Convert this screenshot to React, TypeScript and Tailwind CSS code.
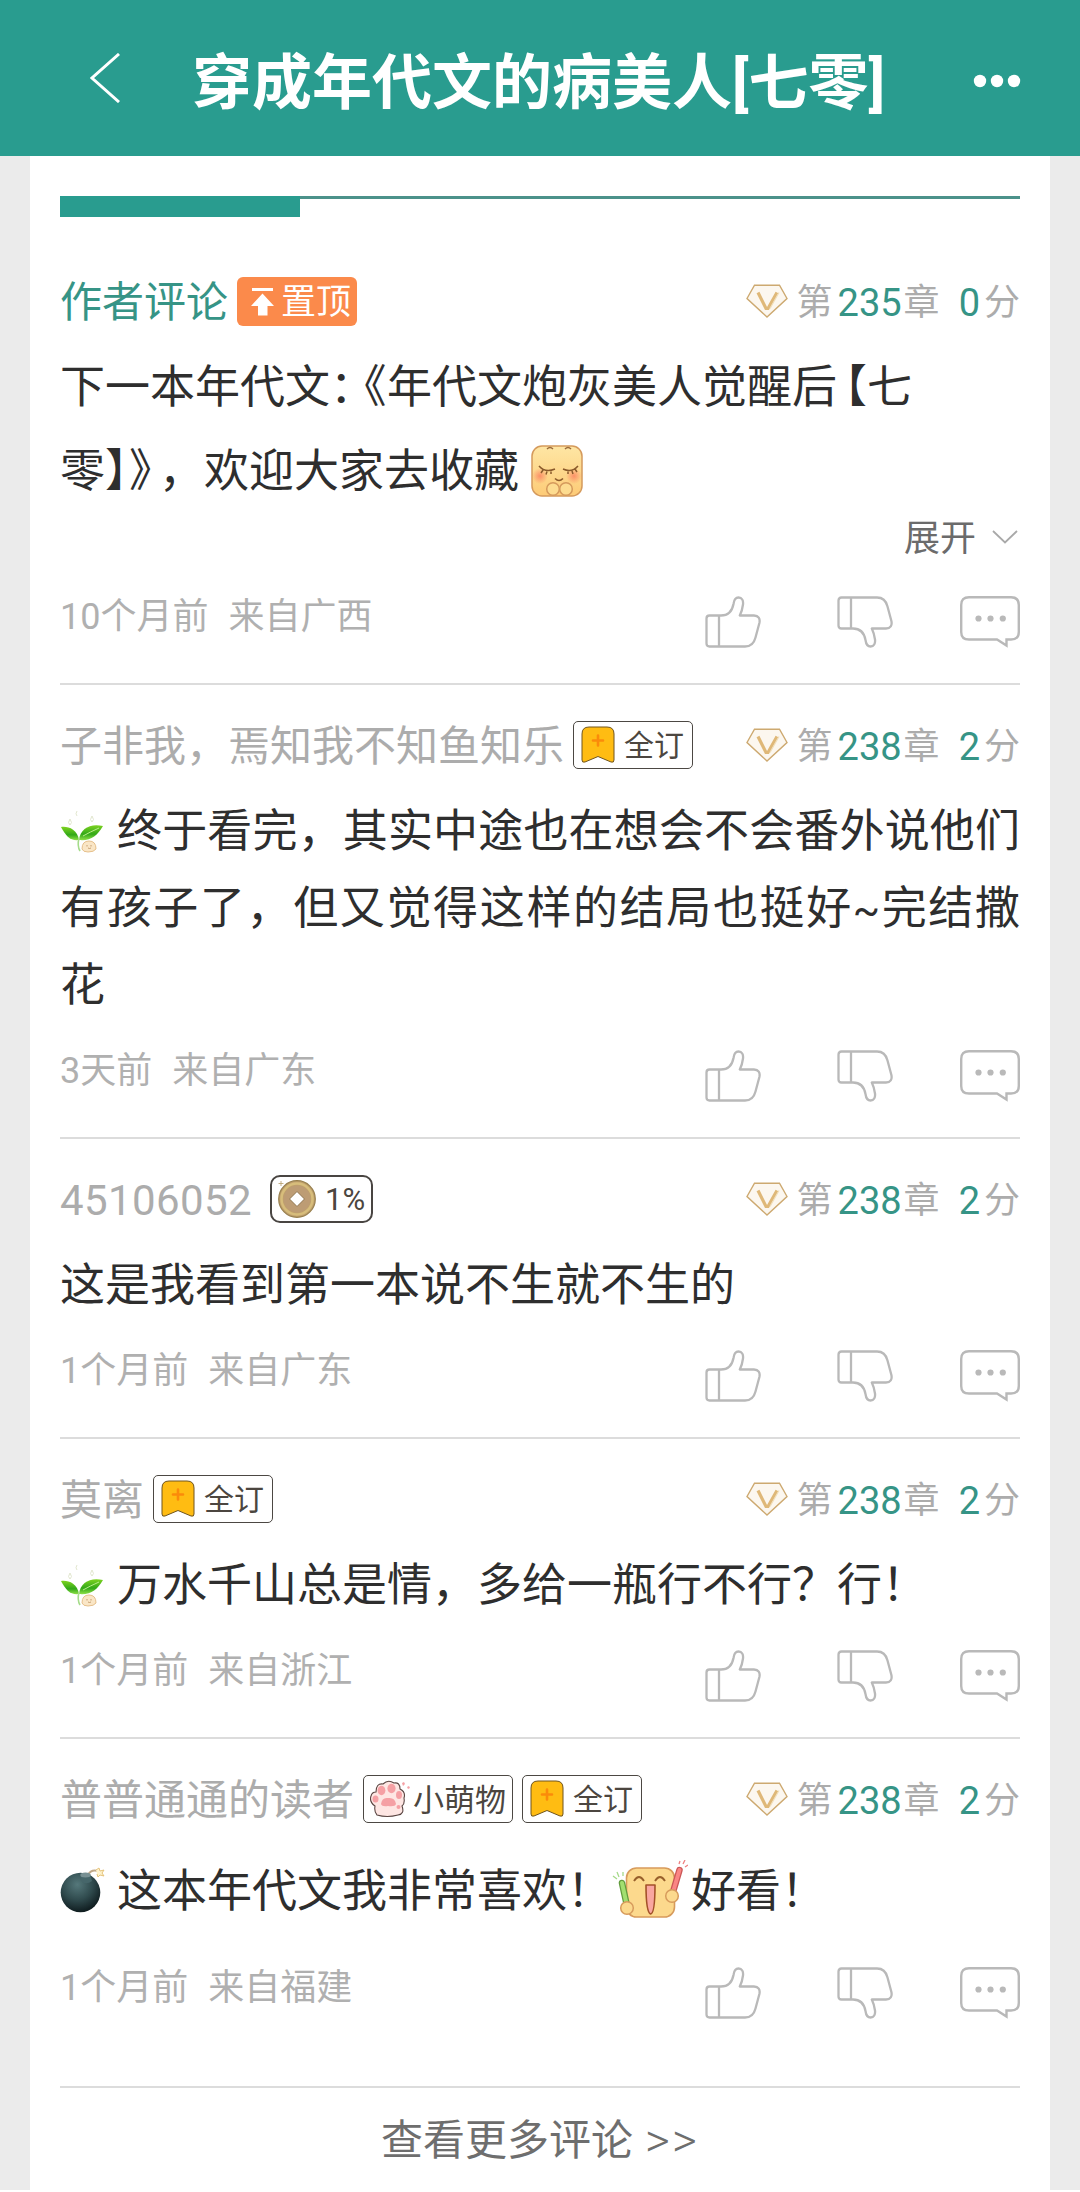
import type { ReactNode } from "react";

const LikeIcon = ({ flip = false }: { flip?: boolean }) => (
  <svg
    className={flip ? "h-[52px] w-[56px] -scale-y-100" : "h-[52px] w-[56px]"}
    viewBox="0 0 56 52"
    fill="none"
    stroke="#b9b9b9"
    strokeWidth="2.3"
    strokeLinejoin="round"
  >
    <path d="M4.5 19.500H16C22 19.500 27 16 28.500 8C29 4 30 1.500 33.500 1.500C37 1.500 38.500 4.500 38 8.500C37.500 12.500 36.500 16 34.800 19.500H49C53.500 19.500 55.300 22.500 54.400 27L50.500 41.500C49 47.500 45.500 50.500 40 50.500H4.500Q1.500 50.500 1.500 47.500V22.500Q1.500 19.500 4.500 19.500Z" />
    <path d="M14 19.500V50.500" />
  </svg>
);

const ReplyIcon = () => (
  <svg className="h-[52px] w-[60px]" viewBox="0 0 60 52" fill="none" stroke="#b9b9b9" strokeWidth="2.4">
    <path d="M9 1.300H51Q58.800 1.300 58.800 9V36Q58.800 43.500 51 43.500H46.500V49.500L37 43.500H9Q1.200 43.500 1.200 36V9Q1.200 1.300 9 1.300Z" />
    <g fill="#b9b9b9" stroke="none">
      <circle cx="18.500" cy="22.500" r="3.100" />
      <circle cx="30.500" cy="22.500" r="3.100" />
      <circle cx="42.800" cy="22.500" r="3.100" />
    </g>
  </svg>
);

const VipIcon = () => (
  <svg className="mr-[9px] mb-[3px] h-[34px] w-[42px]" viewBox="0 0 42 34" fill="none">
    <path d="M8.500 1.200H33.500L41 14.500L21 33L1 14.500Z" fill="#fcf7ef" stroke="#cda970" strokeWidth="1.400" />
    <path d="M12 8.500L20 24.500H22L31 8.500" stroke="#dfb878" strokeWidth="3.200" />
    <path d="M33 8.500L24 24.500" stroke="#f0deba" strokeWidth="1.200" />
  </svg>
);

const Sprout = () => (
  <svg className="mr-[12px] mb-[4px] h-[46px] w-[45px] shrink-0" viewBox="0 0 45 46">
    <defs>
      <linearGradient id="leaf" x1="0" y1="0" x2="0" y2="1">
        <stop offset="0" stopColor="#7ed321" />
        <stop offset=".6" stopColor="#32a818" />
        <stop offset="1" stopColor="#8ee048" />
      </linearGradient>
    </defs>
    <path d="M1 20C8 19 17 22 19 33C10 34 6 29 1 20Z" fill="url(#leaf)" />
    <path d="M43 19C31 16 20 21 19 33C31 34 37 29 43 19Z" fill="url(#leaf)" />
    <path d="M23 29Q30 25 39 21" stroke="#b9ec8b" strokeWidth="1" fill="none" />
    <path d="M19 31Q17 39 20 44" stroke="#a5dc8a" strokeWidth="1.600" fill="none" />
    <path d="M22 42Q22 34 29 34Q36 34 36 42Q34 45 28 45Q23 45 22 42Z" fill="#fae6c6" stroke="#e6c08c" />
    <path d="M27 38v1.500M31 38v1.500M28 41q1.500 1 3 0" stroke="#b98e5c" strokeWidth=".8" fill="none" />
    <path d="M10 12q-3 4 0 6q3-2 0-6M32 9q-3 4 0 6q3-2 0-6M17 4q-2 3 0 5" stroke="#e2e7cf" fill="none" />
  </svg>
);

const Bomb = () => (
  <svg className="mr-[12px] mb-[4px] h-[46px] w-[45px] shrink-0" viewBox="0 0 45 46">
    <defs>
      <radialGradient id="bomb" cx=".42" cy=".3" r=".7">
        <stop offset="0" stopColor="#55787b" />
        <stop offset=".55" stopColor="#304b4e" />
        <stop offset="1" stopColor="#0f1c1f" />
      </radialGradient>
    </defs>
    <path d="M28 8Q31 2 38 4" stroke="#c0a888" strokeWidth="2" fill="none" />
    <path d="M36 3l3-2 1 3 4-1-2 3 2 3-4-1-2 2-1-3" fill="#fff3cd" stroke="#e5c37b" />
    <circle cx="20.500" cy="25.500" r="19.800" fill="url(#bomb)" />
    <path d="M20 9L30 7L32 14Q27 18 22 15Z" fill="#46666a" />
    <ellipse cx="25.500" cy="8" rx="5.200" ry="2.500" fill="#789093" />
  </svg>
);

const SleepyFace = () => (
  <svg className="mb-[3px] ml-[12px] h-[52px] w-[52px]" viewBox="0 0 52 52" fill="none">
    <defs>
      <linearGradient id="sleepy" x1="0" y1="0" x2="0" y2="1">
        <stop offset="0" stopColor="#fee6a4" />
        <stop offset="1" stopColor="#fdcb77" />
      </linearGradient>
      <radialGradient id="blush">
        <stop offset="0" stopColor="#fb7f60" stopOpacity=".8" />
        <stop offset="1" stopColor="#fb7f60" stopOpacity="0" />
      </radialGradient>
    </defs>
    <rect x="1" y="1" width="50" height="50" rx="10" fill="url(#sleepy)" stroke="#d59a5c" strokeWidth="1.500" />
    <circle cx="9" cy="31" r="8" fill="url(#blush)" />
    <circle cx="43" cy="31" r="8" fill="url(#blush)" />
    <path d="M16 4q3-3 6 0M34 4q3-3 6 0" stroke="#9b6a3a" strokeWidth="1.500" />
    <path d="M8 21q6 7 16 3M32 24q9 4 15-3M12 25l-2 3M16 26.500l-1 3M20 26.500v2.500M37 26.500v2.500M41 26l1 3M44 24l2 3M24 33.500q4 4 8 0" stroke="#8a5a2b" strokeWidth="1.500" />
    <g fill="#fddc90" stroke="#d59a5c" strokeWidth="1.500">
      <circle cx="22" cy="44" r="6.300" />
      <circle cx="35" cy="44" r="6.300" />
    </g>
  </svg>
);

const CheerFace = () => (
  <svg className="mr-[3px] mb-[4px] h-[60px] w-[76px]" viewBox="0 0 76 60" fill="none">
    <rect x="14.500" y="8" width="48" height="49" rx="10" fill="#fcd98d" stroke="#d79b5c" strokeWidth="1.600" />
    <path d="M22 21q5-8 10 0M43 21q5-8 10 0" stroke="#98602b" strokeWidth="1.900" />
    <path d="M34 25H43Q43 54 38.500 54Q34 52 34 25Z" fill="#f9a6a0" stroke="#a35129" strokeWidth="1.600" strokeLinejoin="round" />
    <path d="M10 23L15 46" stroke="#629c3d" strokeWidth="6.500" strokeLinecap="round" />
    <path d="M10 23L15 46" stroke="#a2df70" strokeWidth="4" strokeLinecap="round" />
    <path d="M67.500 10L61 32" stroke="#cb5757" strokeWidth="6.500" strokeLinecap="round" />
    <path d="M67.500 10L61 32" stroke="#fa8584" strokeWidth="4" strokeLinecap="round" />
    <path d="M1 16l4 3M5 12l2 5M11 12v4" stroke="#a6d98a" strokeWidth="1.300" />
    <path d="M67 4l1-3M71 4l2-4M73 7l3-2" stroke="#ee8080" strokeWidth="1.300" />
    <g fill="#fcd98d" stroke="#d79b5c" strokeWidth="1.500">
      <circle cx="15" cy="48" r="6.300" />
      <circle cx="60" cy="36" r="6.300" />
    </g>
  </svg>
);

const SubscribedBadge = () => (
  <span className="ml-[9px] flex h-[48px] w-[120px] items-center rounded-[5px] border border-[#4c4843] pl-[7px]">
    <svg className="mr-[9px] h-[38px] w-[34px]" viewBox="0 0 34 38">
      <path d="M1 8Q1 1 8 1H26Q33 1 33 8V34Q33 37 30 36L17 30.500L4 36Q1 37 1 34Z" fill="#ffbc12" stroke="#70551d" />
      <path d="M17 9.500V19.500M12 14.500H22" stroke="#fb8b0a" strokeWidth="2.600" strokeLinecap="round" />
    </svg>
    <span className="pt-[2px] text-[30px] leading-none text-[#4c4640]">全订</span>
  </span>
);

const CutieBadge = () => (
  <span className="ml-[9px] flex h-[48px] w-[150px] items-center rounded-[5px] border border-[#4c4843] pl-[5px]">
    <svg className="mr-[3px] h-[38px] w-[41px] shrink-0" viewBox="0 0 41 38">
      <path d="M6 26Q0 22 2 16Q3 12 7 12Q7 3 14 4Q19-1 25 3Q31 2 31 9Q37 12 35 18Q36 24 33 26Q36 34 29 35Q18 38 8 35Q5 32 6 26Z" fill="#fee6e3" stroke="#5a4542" strokeWidth="1.100" />
      <g fill="#f5a0a4">
        <ellipse cx="12.500" cy="10.500" rx="3.900" ry="4.700" />
        <ellipse cx="22.500" cy="8.500" rx="4.100" ry="4.700" />
        <ellipse cx="30" cy="15" rx="3" ry="4" />
        <ellipse cx="6.500" cy="19" rx="3" ry="3.600" />
        <path d="M12 24Q13 17 19 18Q26 17 27 24Q26 27 19 26Q13 27 12 24Z" />
        <circle cx="29.500" cy="27" r="2" />
        <path d="M33 3l2-1 1 2-2 2zM38 7l2-1 1 2-2 1z" />
      </g>
    </svg>
    <span className="pt-[2px] text-[31px] leading-none whitespace-nowrap text-[#4c4640]">小萌物</span>
  </span>
);

const CoinBadge = () => (
  <span className="ml-[18px] flex h-[48px] w-[103px] items-center rounded-[10px] border-2 border-[#494542] pl-[5px]">
    <svg className="mr-[8px] h-[40px] w-[40px] shrink-0" viewBox="0 0 40 40">
      <circle cx="20" cy="20" r="18.300" fill="#c0a06c" stroke="#98804f" strokeWidth="1.200" />
      <circle cx="20" cy="20" r="15.500" fill="none" stroke="#d7bd7b" strokeWidth="2.500" />
      <circle cx="20" cy="20" r="13.500" fill="#bd9c74" />
      <path d="M20 12.500L27.500 20L20 27.500L12.500 20Z" fill="#fff" stroke="#8f744d" />
      <path d="M4 2v5M1.500 4.500h5" stroke="#b39a68" strokeWidth=".8" />
    </svg>
    <span className="text-[31px] leading-none text-[#4c4640]">1%</span>
  </span>
);

const PinnedBadge = () => (
  <span className="ml-[9px] flex h-[49px] w-[120px] items-center rounded-[6px] bg-[#fb8a4b] pl-[14px]">
    <svg className="mr-[7px] h-[29px] w-[23px]" viewBox="0 0 23 29" fill="#fff">
      <path d="M1 1H22V4H1ZM11.500 6.500L23 19H16.500V28.500H7V19H0Z" />
    </svg>
    <span className="pt-[3px] text-[35px] leading-none text-white">置顶</span>
  </span>
);

type CommentProps = {
  name: string;
  nameClass?: string;
  badges: ReactNode;
  chapter: number;
  score: number;
  time: string;
  from: string;
  children: ReactNode;
  className: string;
};

const Comment = ({ name, nameClass = "text-[#acacac]", badges, chapter, score, time, from, children, className }: CommentProps) => (
  <article className={`border-b-2 border-[#dcdcdc] ${className}`}>
    <header className="flex h-[48px] items-center">
      <span className={`pt-[4px] text-[42px] leading-[48px] whitespace-nowrap ${nameClass}`}>{name}</span>
      {badges}
      <div className="ml-auto flex items-center pt-[3px] text-[36px] leading-[48px] text-[#acacac]">
        <VipIcon />
        <span>第</span>
        <span className="ml-[5px] text-[38px] text-[#369486]">{chapter}</span>
        <span className="ml-[2px]">章</span>
        <span className="ml-[19px] text-[38px] text-[#369486]">{score}</span>
        <span className="ml-[4px]">分</span>
      </div>
    </header>
    {children}
    <footer className="flex h-[52px] items-start">
      <div className="flex gap-[20px] pt-[2px] text-[36px] leading-[38px] text-[#b0b0b0]">
        <span>{time}</span>
        <span>{from}</span>
      </div>
      <div className="ml-auto flex">
        <LikeIcon />
        <span className="ml-[76px] flex">
          <LikeIcon flip />
        </span>
        <span className="ml-[67px] flex">
          <ReplyIcon />
        </span>
      </div>
    </footer>
  </article>
);

export default function App() {
  return (
    <div className="flex h-[2192px] w-[1080px] flex-col overflow-hidden bg-white font-[Roboto,'Noto_Sans_CJK_SC',sans-serif]" lang="zh-CN">
      <nav className="flex h-[156px] shrink-0 items-center bg-[#299c8f] pr-[59px] pl-[90px] text-white">
        <svg className="-mt-[1px] h-[50px] w-[31px]" viewBox="0 0 31 50" fill="none" stroke="currentColor" strokeWidth="3">
          <path d="M29 1L2 25L29 49" />
        </svg>
        <h1 className="mt-[11px] ml-[71px] text-[60px] leading-none font-bold whitespace-nowrap">穿成年代文的病美人[七零]</h1>
        <svg className="mt-[6px] ml-auto h-[14px] w-[48px]" viewBox="0 0 48 14" fill="currentColor">
          <circle cx="7" cy="7" r="6.200" />
          <circle cx="24" cy="7" r="6.200" />
          <circle cx="41" cy="7" r="6.200" />
        </svg>
      </nav>

      <main className="flex h-[2034px] shrink-0 bg-[#ebebeb] px-[30px]">
        <div className="w-[1020px] bg-white px-[30px] pt-[40px]">
          <div className="h-[21px] border-t-[3px] border-[#4b928a]">
            <div className="-mt-[3px] h-[21px] w-[240px] bg-[#299c8f]" />
          </div>

          <Comment
            className="pt-[60px] pb-[35px]"
            name="作者评论"
            nameClass="text-[#369486]"
            badges={<PinnedBadge />}
            chapter={235}
            score={0}
            time="10个月前"
            from="来自广西"
          >
            <div className="mt-[21px] text-[45px] leading-[84px] text-[#2e2e2e]">
              <div className="flex h-[84px] whitespace-nowrap">
                <span>下一本年代文</span>
                <span className="w-[34px] [font-feature-settings:'halt']">：</span>
                <span className="w-[23px] [font-feature-settings:'halt']">《</span>
                <span>年代文炮灰美人觉醒后</span>
                <span className="flex w-[30px] justify-end [font-feature-settings:'halt']">【</span>
                <span>七</span>
              </div>
              <div className="flex h-[84px] items-center whitespace-nowrap">
                <span>零</span>
                <span className="w-[24px] [font-feature-settings:'halt']">】</span>
                <span className="w-[30px] [font-feature-settings:'halt']">》</span>
                <span>，</span>
                <span>欢迎大家去收藏</span>
                <SleepyFace />
              </div>
            </div>
            <div className="mb-[32px] flex h-[50px] items-center justify-end text-[36px] leading-none text-[#6b6b6b]">
              <span>展开</span>
              <svg className="mr-[2px] mb-[4px] ml-[16px] h-[14px] w-[26px]" viewBox="0 0 26 14" fill="none" stroke="#a9a9a9" strokeWidth="1.800">
                <path d="M1 1L13 12.500L25 1" />
              </svg>
            </div>
          </Comment>

          <Comment
            className="pt-[36px] pb-[35px]"
            name="子非我，焉知我不知鱼知乐"
            badges={<SubscribedBadge />}
            chapter={238}
            score={2}
            time="3天前"
            from="来自广东"
          >
            <div className="mt-[24px] mb-[26px] text-[45px] leading-[77px] text-[#2e2e2e]">
              <div className="flex h-[77px] items-center whitespace-nowrap">
                <Sprout />
                <span className="flex-1 [text-align-last:justify]">终于看完，其实中途也在想会不会番外说他们</span>
              </div>
              <p className="h-[77px] [text-align-last:justify]">
                有孩子了，但又觉得这样的结局也挺好<span className="text-[40px] leading-none">~</span>完结撒
              </p>
              <p>花</p>
            </div>
          </Comment>

          <Comment
            className="pt-[36px] pb-[35px]"
            name="45106052"
            nameClass="text-[#acacac] tracking-[0.4px]"
            badges={<CoinBadge />}
            chapter={238}
            score={2}
            time="1个月前"
            from="来自广东"
          >
            <p className="mt-[24px] mb-[26px] text-[45px] leading-[77px] text-[#2e2e2e]">这是我看到第一本说不生就不生的</p>
          </Comment>

          <Comment
            className="pt-[36px] pb-[35px]"
            name="莫离"
            badges={<SubscribedBadge />}
            chapter={238}
            score={2}
            time="1个月前"
            from="来自浙江"
          >
            <div className="mt-[24px] mb-[26px] flex items-center text-[45px] leading-[77px] text-[#2e2e2e]">
              <Sprout />
              <span>万水千山总是情，多给一瓶行不行？行！</span>
            </div>
          </Comment>

          <Comment
            className="pt-[36px] pb-[67px]"
            name="普普通通的读者"
            badges={
              <>
                <CutieBadge />
                <SubscribedBadge />
              </>
            }
            chapter={238}
            score={2}
            time="1个月前"
            from="来自福建"
          >
            <div className="mt-[24px] mb-[31px] flex h-[89px] items-center text-[45px] leading-[89px] text-[#2e2e2e]">
              <Bomb />
              <span>这本年代文我非常喜欢！</span>
              <CheerFace />
              <span>好看！</span>
            </div>
          </Comment>

          <a className="flex h-[106px] items-center justify-center gap-[12px] text-[42px] leading-none text-[#6e6e6e]">
            <span>查看更多评论</span>
            <span className="text-[48px] font-light tracking-[2px]">&gt;&gt;</span>
          </a>
        </div>
      </main>
    </div>
  );
}
